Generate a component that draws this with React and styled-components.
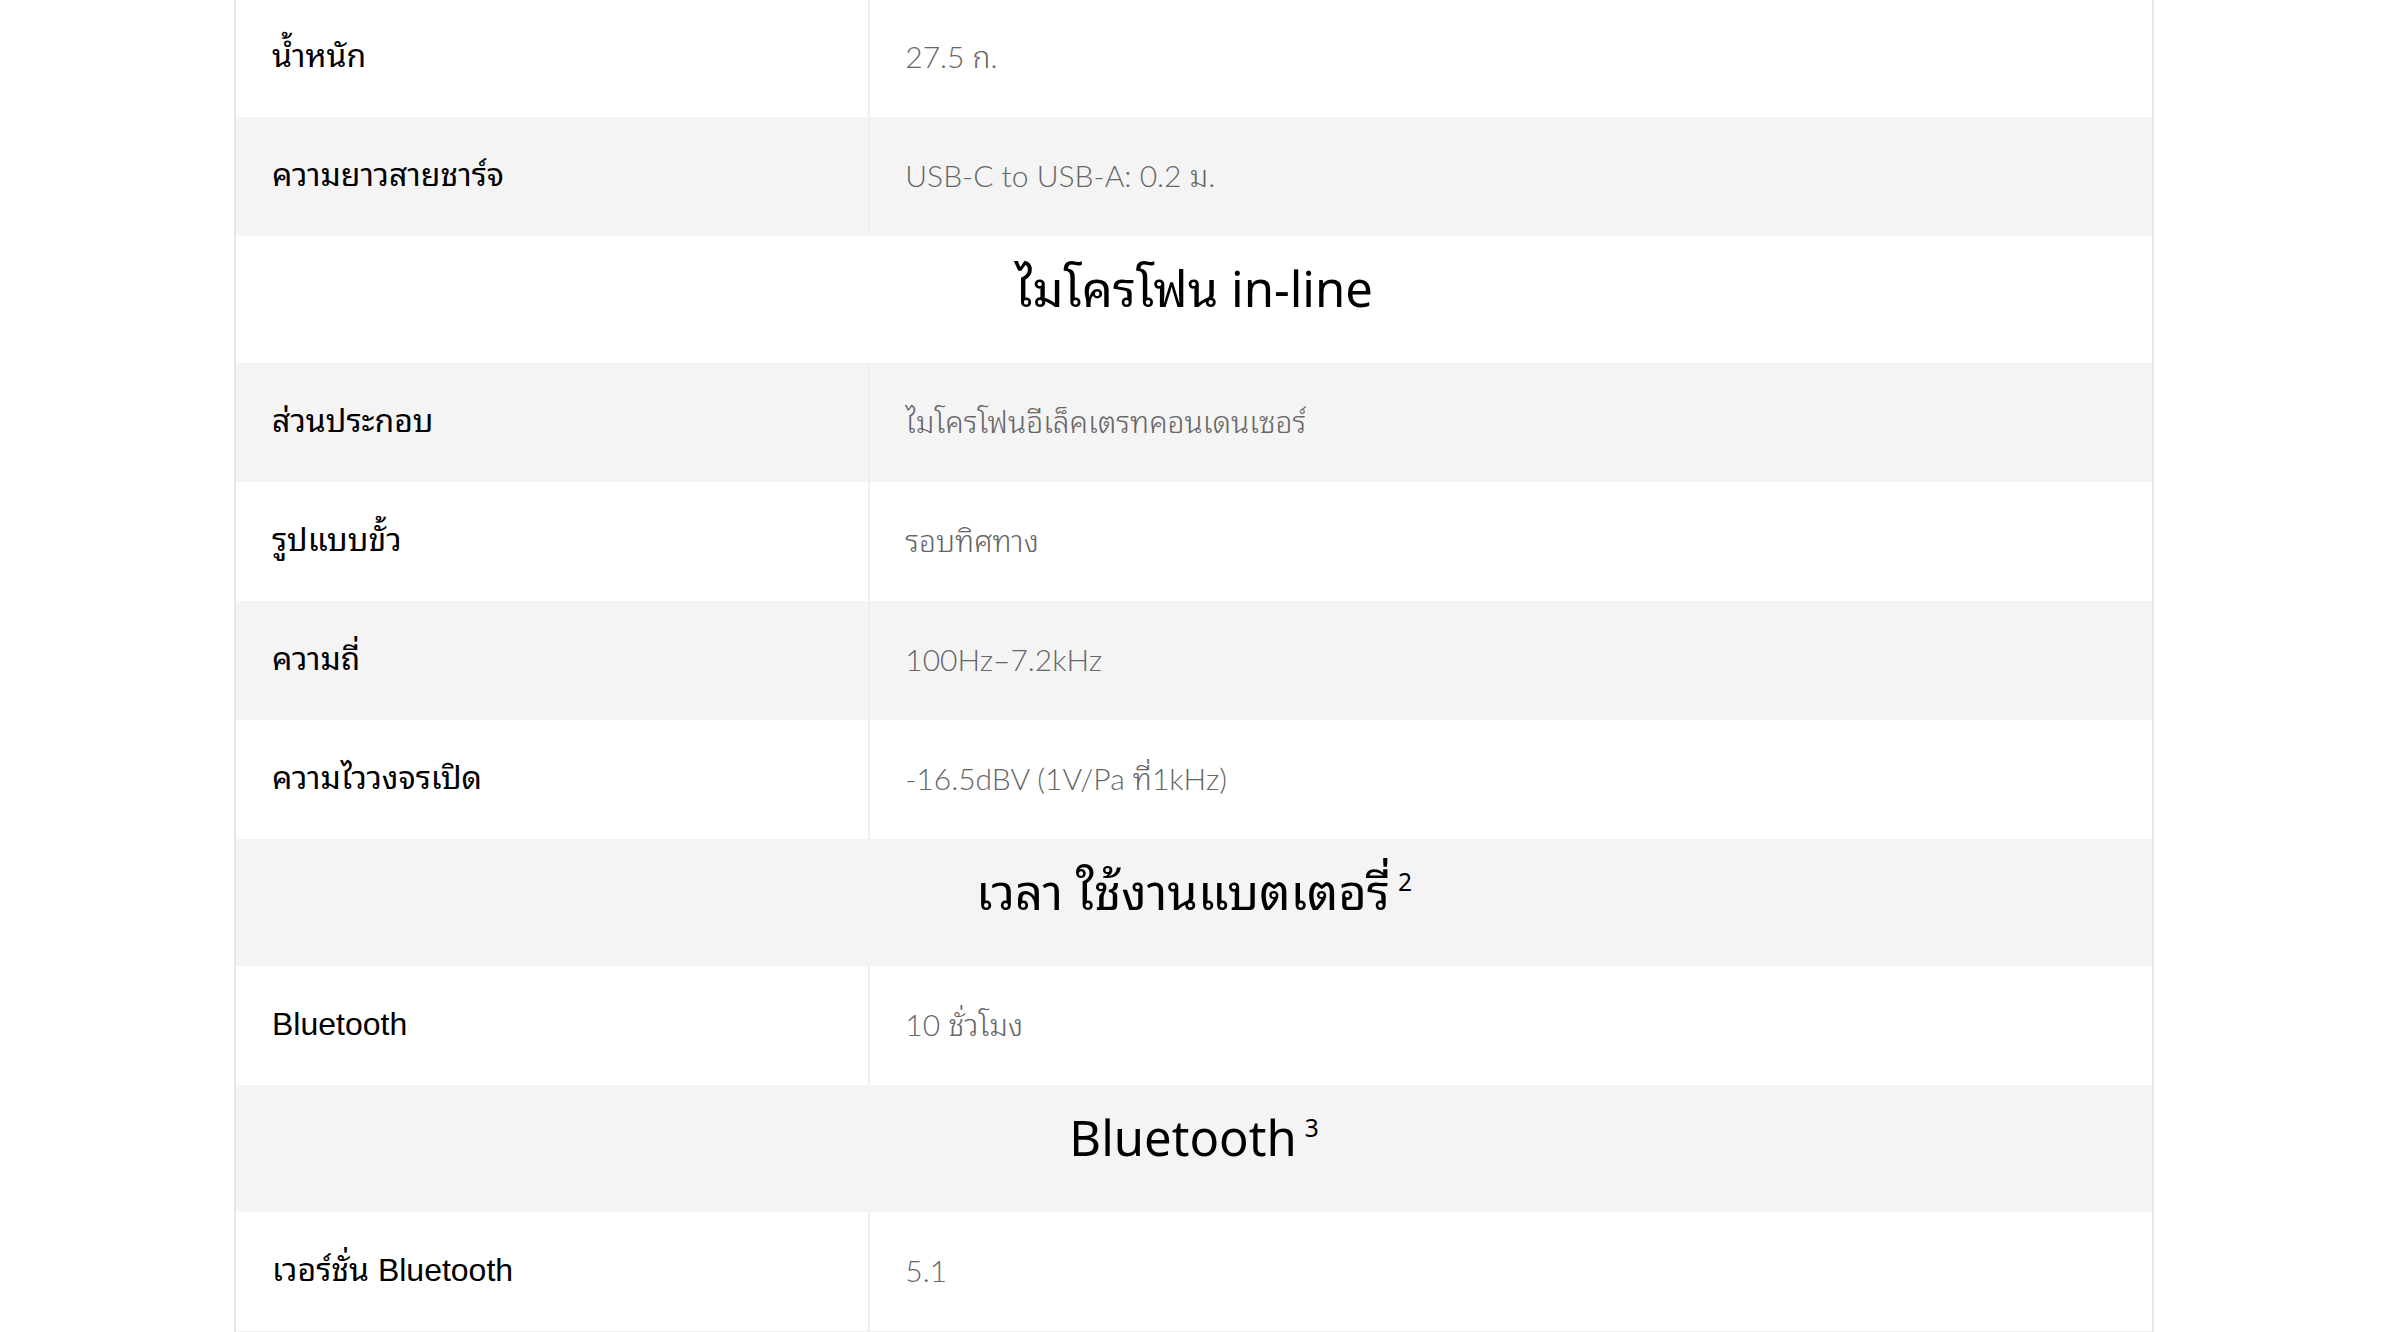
import React from "react";
import styled, { createGlobalStyle } from "styled-components";

const thaiStack = `"Noto Sans Thai Looped", "Loma", "Garuda", "Tlwg Typo", "Waree", "Noto Sans Thai"`;

const Global = createGlobalStyle`
  html, body {
    margin: 0;
    padding: 0;
    background: #ffffff;
  }
  body {
    font-family: "Liberation Sans", ${thaiStack}, "Noto Sans", sans-serif;
    overflow: hidden;
  }
`;

const Page = styled.div`
  margin-top: -2px;
`;

const Table = styled.div`
  box-sizing: border-box;
  width: 1920px;
  margin: 0 auto;
  border-left: 2px solid #e6e6e6;
  border-right: 2px solid #e6e6e6;
`;

const Row = styled.div`
  display: grid;
  grid-template-columns: 33% 1fr;
  background: ${(p) => (p.$shade ? "#f4f4f4" : "#ffffff")};
`;

const Label = styled.div`
  box-sizing: border-box;
  height: 119px;
  display: flex;
  align-items: center;
  padding: 0 36px 3px;
  font-family: "Liberation Sans", ${thaiStack}, "Noto Sans", sans-serif;
  font-size: 32px;
  line-height: 40px;
  color: #000000;
`;

const Value = styled.div`
  box-sizing: border-box;
  height: 119px;
  display: flex;
  align-items: center;
  padding: 0 36px 3px 35px;
  border-left: 2px solid #efefef;
  font-family: Lato, ${thaiStack}, "Noto Sans", sans-serif;
  font-weight: 300;
  font-size: 30px;
  line-height: 40px;
  color: #666666;
`;

const Header = styled.div`
  box-sizing: border-box;
  height: 127px;
  display: flex;
  align-items: center;
  justify-content: center;
  padding-bottom: 23px;
  font-family: "Noto Sans", ${thaiStack}, sans-serif;
  font-size: 49px;
  line-height: 60px;
  color: #000000;
  background: ${(p) => (p.$shade ? "#f4f4f4" : "#ffffff")};
`;

const Sup = styled.sup`
  font-size: 0.5em;
  margin-left: 8px;
  line-height: 0;
  position: relative;
  top: -0.35em;
`;

const rows = [
  { type: "row", label: "น้ำหนัก", value: "27.5 ก." },
  { type: "row", label: "ความยาวสายชาร์จ", value: "USB-C to USB-A: 0.2 ม." },
  { type: "header", title: "ไมโครโฟน in-line" },
  { type: "row", label: "ส่วนประกอบ", value: "ไมโครโฟนอีเล็คเตรทคอนเดนเซอร์" },
  { type: "row", label: "รูปแบบขั้ว", value: "รอบทิศทาง" },
  { type: "row", label: "ความถี่", value: "100Hz–7.2kHz" },
  { type: "row", label: "ความไววงจรเปิด", value: "-16.5dBV (1V/Pa ที่1kHz)" },
  { type: "header", title: "เวลา ใช้งานแบตเตอรี่", note: "2" },
  { type: "row", label: "Bluetooth", value: "10 ชั่วโมง" },
  { type: "header", title: "Bluetooth", note: "3" },
  { type: "row", label: "เวอร์ชั่น Bluetooth", value: "5.1" },
  { type: "row", label: "", value: "" },
];

export default function App() {
  return (
    <>
      <Global />
      <Page>
        <Table>
          {rows.map((r, i) =>
            r.type === "header" ? (
              <Header key={i} $shade={i % 2 === 1}>
                {r.title}
                {r.note && <Sup>{r.note}</Sup>}
              </Header>
            ) : (
              <Row key={i} $shade={i % 2 === 1}>
                <Label>{r.label}</Label>
                <Value>{r.value}</Value>
              </Row>
            )
          )}
        </Table>
      </Page>
    </>
  );
}
